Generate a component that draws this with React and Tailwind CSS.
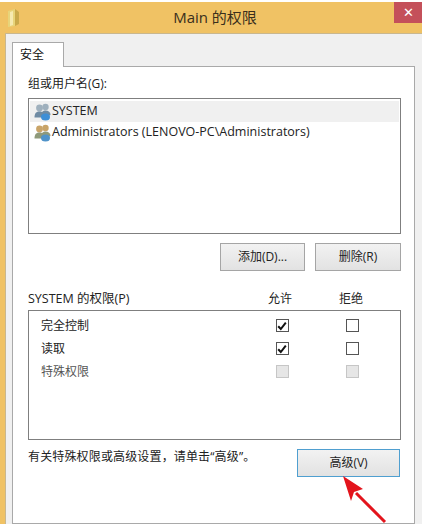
import React from "react";

const font = "font-['Open_Sans','Noto_Sans_CJK_SC',sans-serif]";

const FolderIcon = () => (
  <svg width="14" height="20" viewBox="0 0 14 20">
    <path d="M1 3 L8 1 L8 18 L1 19 Z" fill="#e8d47a" />
    <path d="M8 1 L12 4 L12 16 L8 18 Z" fill="#c9a94a" />
    <path d="M3 4 L6 3 L6 17 L3 18 Z" fill="#f6eab0" />
  </svg>
);

const UsersIcon = ({ shirt, head, badge }) => (
  <svg width="17" height="18" viewBox="0 0 17 18">
    <circle cx="11.5" cy="4" r="3.2" fill={head} />
    <path d="M7 13 C7 9 9 7.5 11.5 7.5 C14.5 7.5 16.5 9 16.5 12 L12 14 Z" fill={shirt} />
    <circle cx="5.5" cy="5" r="3.4" fill={head} />
    <path d="M0.5 14.5 C0.5 10 2.5 8.5 5.5 8.5 C8.5 8.5 10.5 10 10.5 14.5 Z" fill={shirt} />
    <ellipse cx="11.5" cy="14" rx="4.5" ry="3.5" fill={badge} />
  </svg>
);

const Check = () => (
  <svg width="10" height="10" viewBox="0 0 10 10">
    <path d="M1.2 5.2 L3.8 8 L8.8 1.6" fill="none" stroke="#111111" strokeWidth="2" />
  </svg>
);

const Box = ({ state }) => {
  if (state === "off") {
    return <div className="w-[13px] h-[13px] border border-[#c6c6c6] bg-[#e6e6e6]" />;
  }
  return (
    <div className="w-[13px] h-[13px] border border-[#555555] bg-white flex items-center justify-center">
      {state === "on" && <Check />}
    </div>
  );
};

const Button = ({ children, className }) => (
  <button className={`h-[28px] border text-[12px] text-[#222222] bg-gradient-to-b from-[#f2f2f2] to-[#e2e2e2] ${className}`}>
    {children}
  </button>
);

const perms = [
  { name: "完全控制", allow: "on", deny: "" },
  { name: "读取", allow: "on", deny: "" },
  { name: "特殊权限", allow: "off", deny: "off" },
];

export default function App() {
  return (
    <div className={`relative w-[422px] h-[524px] overflow-hidden bg-white pt-[2px] flex flex-col ${font}`}>
      <div className="h-[31px] shrink-0 bg-[#f0c264] flex items-start relative">
        <div className="w-[394px] h-[31px] pl-[7px] flex items-center">
          <FolderIcon />
          <div className="flex-1 text-center text-[15px] text-[#3a2f1c] pl-[15px] -mt-[1px]">Main 的权限</div>
        </div>
        <div className="w-[28px] h-[21px] bg-[#c4505a] text-white text-[13px] flex items-center justify-center">✕</div>
      </div>

      <div className="flex-1 flex bg-[#f0c264] pl-[5px]">
        <div className="flex-1 min-w-0 bg-[#f0f0f0] border-l border-t border-[#c9b78e] pt-[8px] pl-[6px] pr-[7px] flex flex-col">
          <div className="w-[52px] h-[25px] -mb-px relative z-10 bg-white border border-b-0 border-[#a9a9a9] text-[12px] text-[#111111] pl-[7px] flex items-center">
            安全
          </div>
          <div className="flex-1 min-w-0 bg-white border border-[#a9a9a9] pt-[9px] pl-[15px] pr-[13px]">
            <div className="h-[16px] leading-[16px] text-[12px] text-[#222222]">组或用户名(G):</div>
            <div className="mt-[6px] h-[136px] border border-[#7f7f7f] px-px pt-[2px] text-[12.5px] text-[#222222]">
              <div className="h-[21px] bg-[#f0f0f0] pl-[4px] flex items-center gap-[1px]">
                <UsersIcon shirt="#6f8ba3" head="#9fb0bd" badge="#3f8fd6" />
                <span>SYSTEM</span>
              </div>
              <div className="h-[21px] pl-[4px] flex items-center gap-[1px]">
                <UsersIcon shirt="#8f9a7a" head="#c9a468" badge="#4f93c9" />
                <span>Administrators (LENOVO-PC\Administrators)</span>
              </div>
            </div>

            <div className="mt-[9px] flex justify-end gap-[10px]">
              <Button className="w-[85px] border-[#a5a5a5]">添加(D)...</Button>
              <Button className="w-[86px] border-[#a5a5a5]">删除(R)</Button>
            </div>

            <div className="mt-[20px] h-[16px] flex text-[12.5px] leading-[16px] text-[#222222]">
              <span className="w-[217px] whitespace-nowrap">SYSTEM 的权限(P)</span>
              <span className="w-[70px] text-center text-[12px]">允许</span>
              <span className="w-[72px] text-center text-[12px]">拒绝</span>
            </div>
            <div className="mt-[3px] h-[130px] border border-[#7f7f7f] pt-[3px] text-[12px] text-[#222222]">
              {perms.map((p) => (
                <div key={p.name} className="h-[23px] flex items-center">
                  <span className={`w-[218px] pl-[12px] ${p.allow === "off" ? "text-[#555555]" : ""}`}>{p.name}</span>
                  <span className="w-[70px] flex justify-center"><Box state={p.allow} /></span>
                  <span className="w-[70px] flex justify-center"><Box state={p.deny} /></span>
                </div>
              ))}
            </div>

            <div className="mt-[9px] flex items-start justify-between">
              <span className="text-[12px] leading-[16px] tracking-[0.15px] text-[#222222]">有关特殊权限或高级设置，请单击“高级”。</span>
              <Button className="w-[103px] mr-px border-[#4f9fd0]">高级(V)</Button>
            </div>
          </div>
        </div>
      </div>

      <svg className="absolute left-[336px] top-[472px]" width="54" height="52" viewBox="0 0 54 52">
        <path d="M49 50 L20 21" stroke="#e3141c" strokeWidth="3" fill="none" />
        <path d="M7 4 L27 17 L18 20 L15 29 Z" fill="#e3141c" />
      </svg>
    </div>
  );
}
